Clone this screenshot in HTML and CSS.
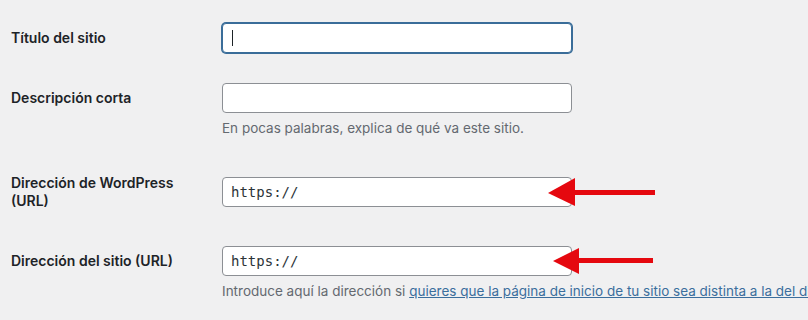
FILE: index.html
```html
<!DOCTYPE html>
<html lang="es">
<head>
    <meta charset="UTF-8">
    <meta name="viewport" content="width=device-width, initial-scale=1.0">
    <title>Ajustes generales</title>
    <link rel="stylesheet" href="styles.css">
</head>
<body>
    <div class="settings">
        <div class="row row-title">
            <div class="label">Título del sitio</div>
            <div class="input focused"><span class="caret"></span></div>
        </div>

        <div class="row row-tagline">
            <div class="label">Descripción corta</div>
            <div class="input"></div>
        </div>
        <p class="description">En pocas palabras, explica de qué va este sitio.</p>

        <div class="row row-wpurl">
            <div class="label">Dirección de WordPress<br>(URL)</div>
            <div class="input url">https://</div>
        </div>

        <div class="row row-siteurl">
            <div class="label">Dirección del sitio (URL)</div>
            <div class="input url">https://</div>
        </div>
        <p class="description">Introduce aquí la dirección si <a href="#">quieres que la página de inicio de tu sitio sea distinta a la del directorio de instalación de WordPress</a>.</p>

        <!-- flechas de anotación -->
        <svg class="arrows" width="808" height="320" viewBox="0 0 808 320">
            <polygon points="548,193 575,178 575,206" fill="#e5080f"/>
            <rect x="573" y="190" width="82" height="5" fill="#e5080f"/>
            <polygon points="553,261 579,248 579,274" fill="#e5080f"/>
            <rect x="577" y="258" width="76" height="5" fill="#e5080f"/>
        </svg>
    </div>
</body>
</html>
```

FILE: styles.css
```css
body {
    margin: 0;
    background: #f0f0f1;
    font-family: Inter, "Noto Sans", sans-serif;
    color: #1d2327;
    overflow: hidden;
}
.settings {
    position: relative;
    padding: 23px 0 0 11px;
    height: 297px;
}
.row {
    display: grid;
    grid-template-columns: 211px 350px;
    align-items: center;
}
.row-tagline {
    margin-top: 30px;
}
.row-wpurl {
    margin-top: 37px;
}
.row-siteurl {
    margin-top: 36px;
}
.label {
    font-size: 14px;
    font-weight: 600;
    line-height: 18px;
}
.input {
    box-sizing: border-box;
    height: 30px;
    background: #fff;
    border: 1px solid #8c8f94;
    border-radius: 4px;
    padding: 0 8px;
    display: flex;
    align-items: center;
}
.input.focused {
    border-color: #3a6d99;
    box-shadow: 0 0 0 1px #3a6d99;
}
.caret {
    width: 1px;
    height: 16px;
    background: #1d2327;
    margin-left: 1px;
}
.url {
    font-family: "DejaVu Sans Mono", "Liberation Mono", monospace;
    font-size: 14px;
    color: #2c3338;
}
.description {
    margin: 6px 0 0 211px;
    font-size: 13.5px;
    line-height: 18px;
    color: #646970;
    white-space: nowrap;
}
.description a {
    color: #3b6e9d;
    text-decoration: underline;
}
.arrows {
    position: absolute;
    left: 0;
    top: 0;
}
```
